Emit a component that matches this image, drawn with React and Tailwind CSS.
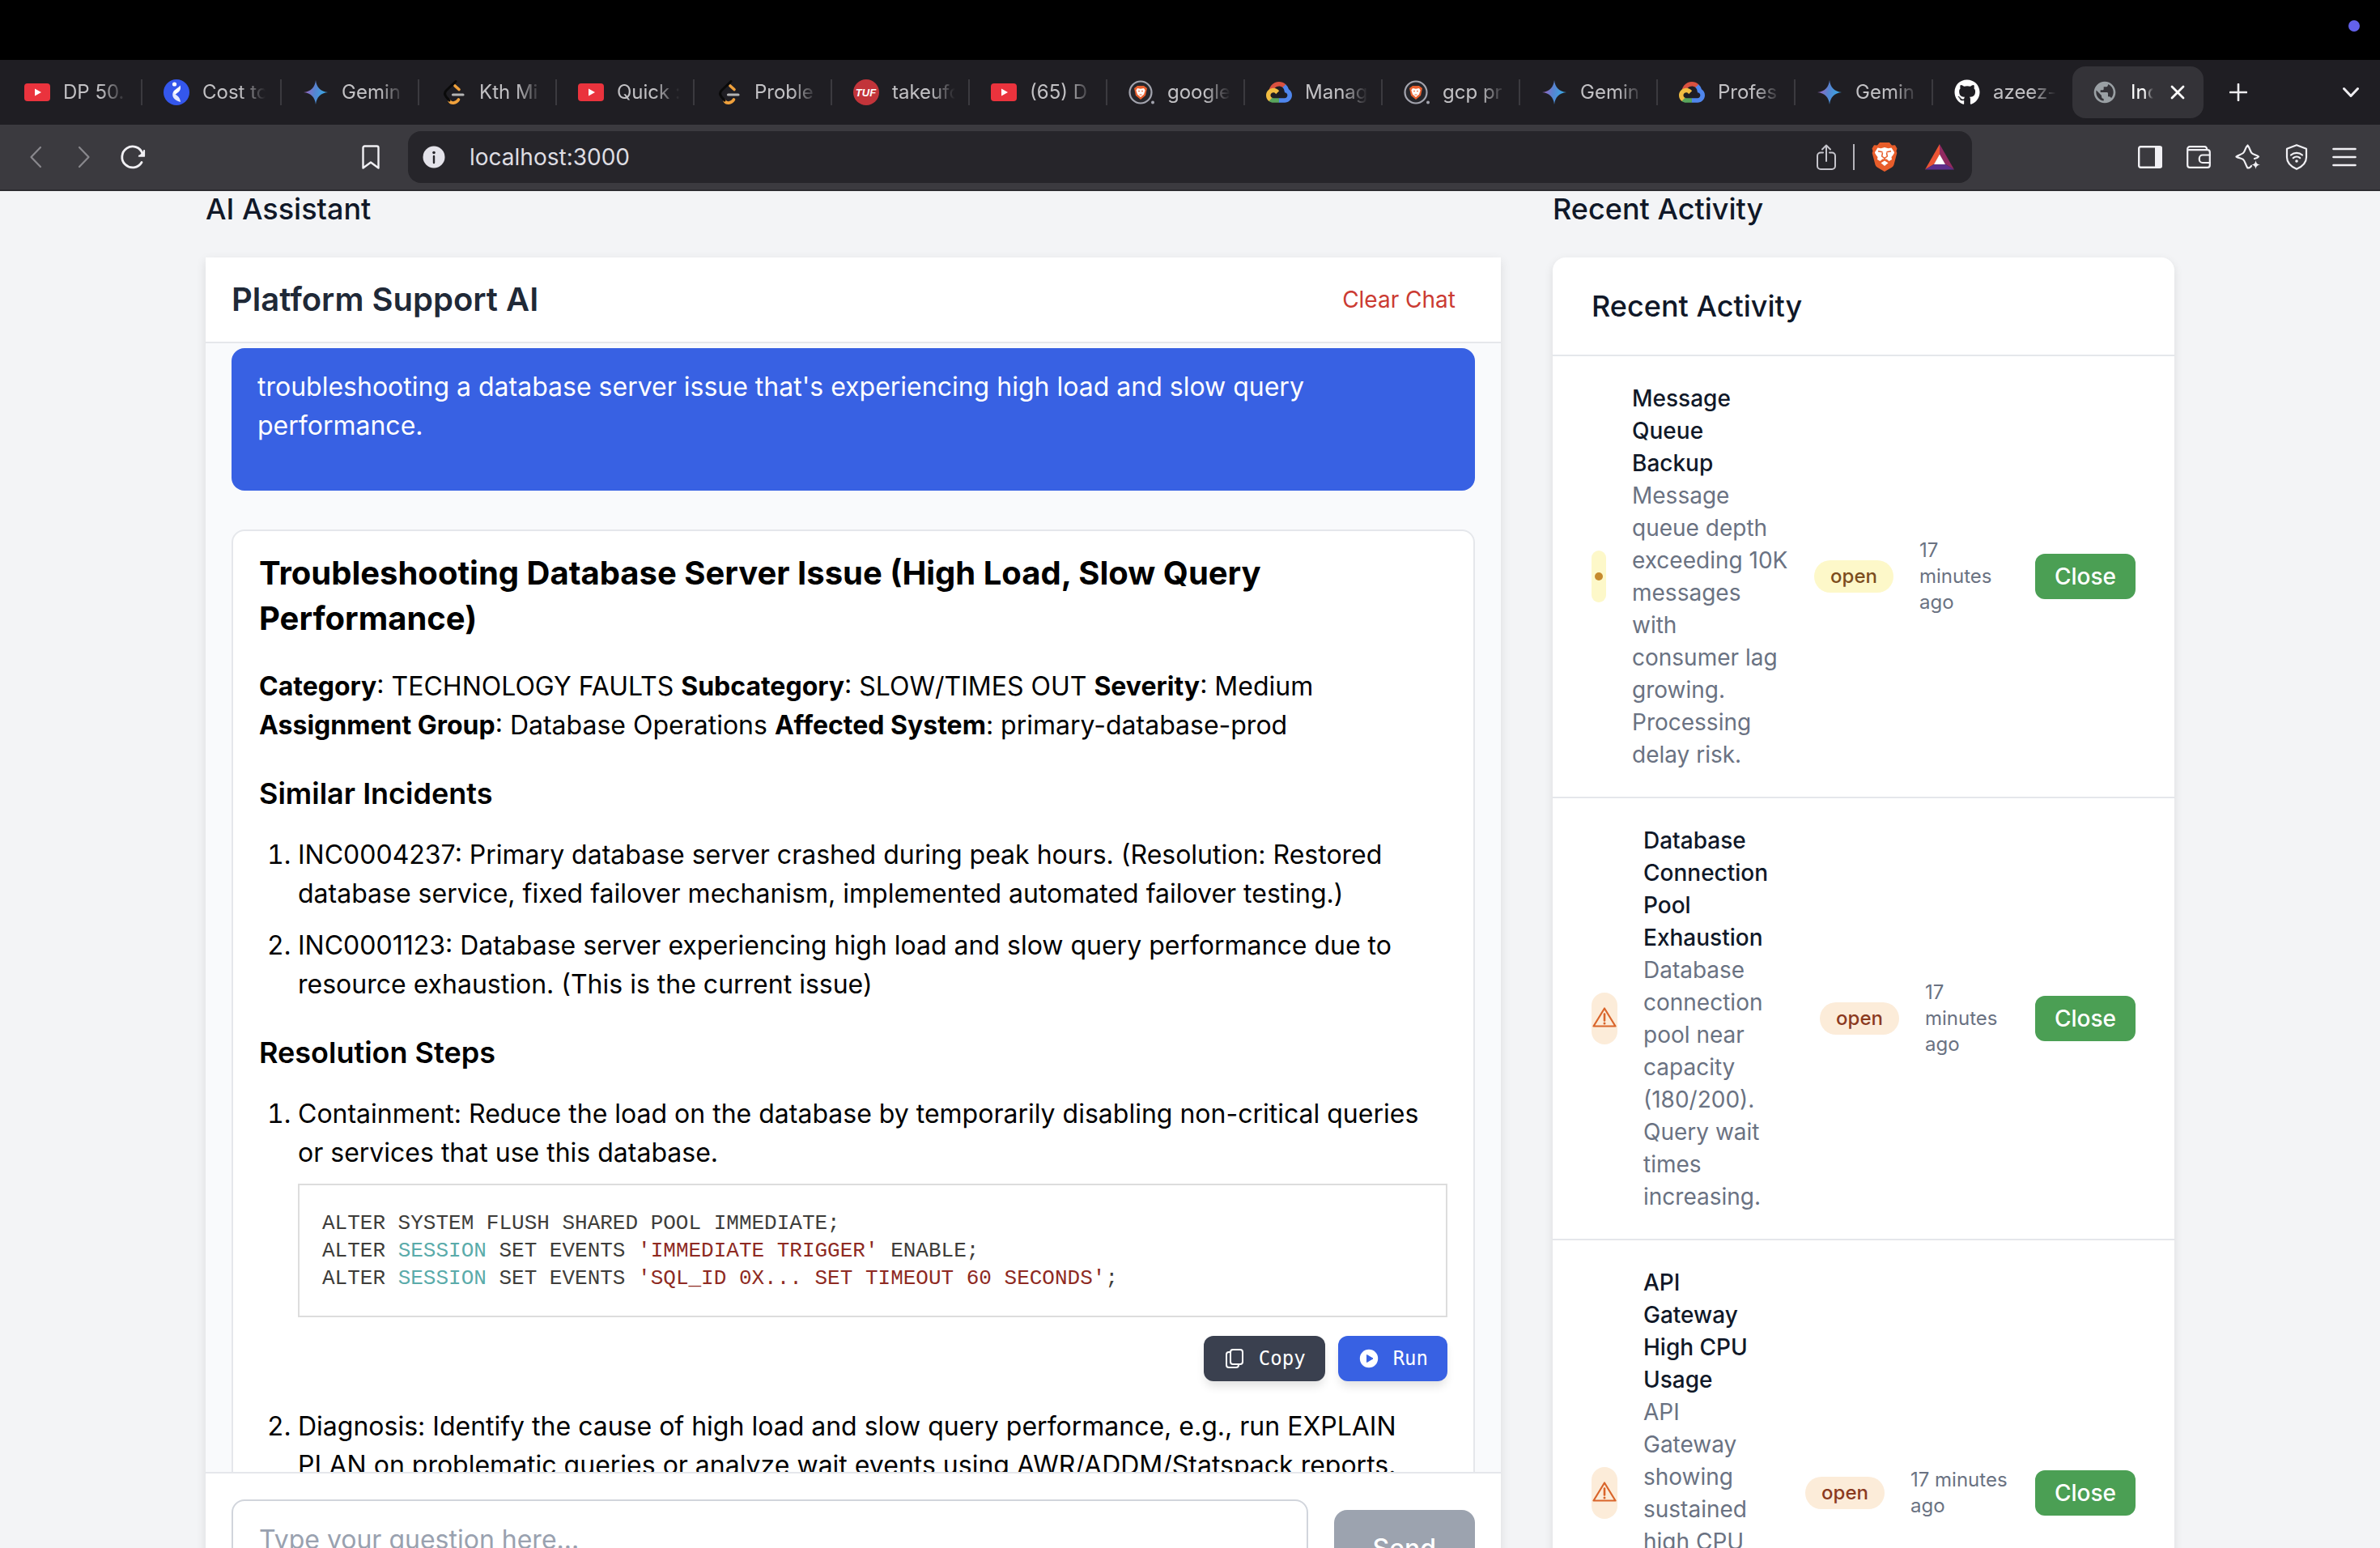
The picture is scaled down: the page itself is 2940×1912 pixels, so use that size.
import React from "react";
import { FaGithub } from "react-icons/fa";
import { MdPublic } from "react-icons/md";

/* ---------- favicons ---------- */

const YouTube = () => (
  <svg viewBox="0 0 32 32" className="size-8">
    <rect x="0" y="5" width="32" height="22" rx="4" fill="#ea333d" />
    <path d="M13 11.5v9l8-4.5z" fill="#fff" />
  </svg>
);

const CostIcon = () => (
  <svg viewBox="0 0 32 32" className="size-8">
    <circle cx="16" cy="16" r="16" fill="#3457ec" />
    <circle cx="13.5" cy="6" r="2.6" fill="#fff" />
    <path d="M12 16.500C11.500 13.500 18.500 11 20.500 7.500c1 3 .5 6.500-2.500 8.500l-4.500 3.500C12.500 19 12 18 12 16.500z" fill="#fff" />
    <path d="M12 15.500c1 3 8.500 4.500 9 12.500-4-1-8.500-3.500-9.500-7-.5-2-.3-4 .5-5.500z" fill="#e4e9fd" />
  </svg>
);

const Gemini = () => (
  <svg viewBox="0 0 32 32" className="size-8">
    <defs>
      <linearGradient id="gem" x1="0" x2="1" y1="0.4" y2="0.6">
        <stop offset="0.1" stopColor="#9168c0" />
        <stop offset="0.45" stopColor="#5684d1" />
        <stop offset="0.8" stopColor="#3fa0e0" />
      </linearGradient>
    </defs>
    <path d="M16 1c1 9 6 14 15 15-9 1-14 6-15 15-1-9-6-14-15-15C10 15 15 10 16 1z" fill="url(#gem)" />
  </svg>
);

const LeetCode = () => (
  <svg viewBox="0 0 32 32" className="size-8" fill="none" strokeLinecap="round" strokeWidth="3.600">
    <path d="M18 8l5 4.500M11 26.500c2 3.500 8 4 11.500-1.500" stroke="#f0a13c" />
    <path d="M19 2.500L7.500 13.500c-2.500 2.500-2.500 5.500 0 8.500l3.500 4" stroke="#0a0a0a" strokeWidth="3" />
    <path d="M15.500 19H28" stroke="#b3b3b3" strokeWidth="3.200" />
  </svg>
);

const Tuf = () => (
  <svg viewBox="0 0 32 32" className="size-8">
    <circle cx="16" cy="16" r="16" fill="#c2343a" />
    <text x="15.500" y="20.500" textAnchor="middle" fontFamily="Liberation Sans, sans-serif" fontStyle="italic" fontWeight="700" fontSize="13" fill="#fff">TUF</text>
  </svg>
);

const BraveSearch = () => (
  <svg viewBox="0 0 32 32" className="size-8">
    <circle cx="15" cy="16" r="13.500" fill="#26262b" stroke="#a3a4ae" strokeWidth="2.200" />
    <circle cx="30" cy="28.500" r="2" fill="#a3a4ae" />
    <path d="M11 8h8l4 3-2 9-6 5-6-5-2-9z" fill="#e9602f" />
    <path d="M11 11l4 .8 4-.8 1.600 2.500-1.600 5-4 3.500-4-3.500-1.600-5z" fill="#fff" />
    <path d="M12 14.500h2M16 14.500h2M13.500 19h3" stroke="#e9602f" strokeWidth="1" />
  </svg>
);

const GoogleCloud = () => (
  <svg viewBox="0 0 256 206" className="w-8">
    <path d="M170.252 56.819l22.253-22.253 1.483-9.370C153.437-11.677 88.976-7.496 52.420 33.920 42.267 45.423 34.734 59.764 30.717 74.573l7.970-1.123 44.505-7.340 3.436-3.513c19.797-21.742 53.270-24.667 76.128-6.168l7.496.390z" fill="#d95140" />
    <path d="M224.205 73.918a100.249 100.249 0 0 0-30.217-48.722l-31.232 31.232a55.515 55.515 0 0 1 20.379 44.037v5.544c15.350 0 27.797 12.445 27.797 27.796 0 15.352-12.446 27.485-27.797 27.485h-55.671l-5.466 5.934v33.340l5.466 5.231h55.670c39.930.311 72.553-31.494 72.864-71.424a72.303 72.303 0 0 0-31.793-60.453" fill="#4f86ed" />
    <path d="M71.870 205.796h55.593V161.290H71.870a27.275 27.275 0 0 1-11.400-2.498l-8.041 2.458-22.408 22.253-1.952 7.574c12.567 9.489 28.007 14.781 43.801 14.719" fill="#58a55c" />
    <path d="M71.870 61.425C31.940 61.664-.237 94.228.002 134.160a72.301 72.301 0 0 0 28.067 56.918l32.240-32.248c-13.987-6.313-20.208-22.780-13.895-36.766 6.313-13.987 22.780-20.208 36.765-13.895 6.166 2.783 11.112 7.721 13.895 13.895l32.247-32.247A72.273 72.273 0 0 0 71.870 61.424" fill="#f2bd42" />
  </svg>
);

const GitHub = () => <FaGithub className="size-8 text-white" />;

/* ---------- toolbar icons ---------- */

const line = { fill: "none", stroke: "currentColor", strokeLinecap: "round", strokeLinejoin: "round" };

const Chevron = ({ d }) => (
  <svg viewBox="0 0 16 28" className="h-7 w-4" {...line} strokeWidth="2.200"><path d={d} /></svg>
);

const Reload = () => (
  <svg viewBox="0 0 32 32" className="size-8" {...line} strokeWidth="2.800">
    <path d="M27 22.500A13 13 0 1 1 28 11.500" />
    <path d="M31 7v8.500h-8.500z" fill="currentColor" stroke="none" />
    <path d="M30 8v6.500h-6" strokeWidth="2.200" />
  </svg>
);

const Bookmark = () => (
  <svg viewBox="0 0 22 30" className="h-[30px] w-[22px]" {...line} strokeWidth="2.400">
    <path d="M1.500 3.500a2 2 0 0 1 2-2h15a2 2 0 0 1 2 2v25L11 21.500 1.500 28.500z" />
  </svg>
);

const Info = () => (
  <svg viewBox="0 0 28 28" className="size-7">
    <circle cx="14" cy="14" r="13.500" fill="#e4e3ea" />
    <circle cx="14" cy="8.500" r="1.800" fill="#26252a" />
    <path d="M14 13v8" stroke="#26252a" strokeWidth="2.400" strokeLinecap="round" />
  </svg>
);

const Share = () => (
  <svg viewBox="0 0 24 32" className="h-8 w-6 text-[#c6c5cc]" {...line} strokeWidth="2">
    <path d="M8 10.500H5a4 4 0 0 0-4 4V27a4 4 0 0 0 4 4h14a4 4 0 0 0 4-4V14.500a4 4 0 0 0-4-4h-3" />
    <path d="M12 21V2M7 6.500L12 1.500l5 5" />
  </svg>
);

const BraveLion = () => (
  <svg viewBox="0 0 32 36" className="h-9 w-8">
    <path d="M10 0h12l3 3.500 4-.3L31.500 7.500l-1 3 .8 2.500-3.800 14.500c-.5 1.500-1.500 2.500-3 3.500L16 36l-8.500-5c-1.500-1-2.500-2-3-3.500L.7 13l.8-2.500-1-3L3 3.200l4 .3z" fill="#e85d2a" />
    <path d="M7.500 6.500l4 .8L16 6l4.500 1.300 4-.8 3.500 5.500c.3 1.500-2 4-3.500 6l.5 3-3.500 2-3-2.500h-5L10.500 23 7 21l.5-3C6 16 3.700 13.500 4 12z" fill="#fff" />
    <path d="M16 22.500l4.500 2.800L16 29l-4.500-3.700z" fill="#fff" />
    <path d="M8 10.800l5.500 1M24 10.800l-5.500 1M13.500 12.500l-.8 4.500 3.300 2.500 3.300-2.500-.8-4.500M16 19.500v2" fill="none" stroke="#e85d2a" strokeWidth="1.500" />
  </svg>
);

const Bat = () => (
  <svg viewBox="0 0 36 32" className="h-8 w-9">
    <path d="M18 0L0 31.500l11.500-7L18 13z" fill="#ec5434" />
    <path d="M18 0l18 31.500-11.500-7L18 13z" fill="#922a61" />
    <path d="M0 31.500h36l-11.500-7h-13z" fill="#5d2f8c" />
    <path d="M18 12.500l7 12.500H11z" fill="#fff" />
  </svg>
);

const Sidebar = () => (
  <svg viewBox="0 0 30 28" className="h-7 w-[30px]">
    <rect x="1.200" y="1.200" width="27.600" height="25.600" rx="2" fill="none" stroke="currentColor" strokeWidth="2.400" />
    <rect x="21" y="1" width="8.500" height="26" rx="1" fill="currentColor" />
  </svg>
);

const Wallet = () => (
  <svg viewBox="0 0 30 28" className="h-7 w-[30px]" {...line} strokeWidth="2.200">
    <path d="M1.200 4v20a2.800 2.800 0 0 0 2.800 2.800h22a2.800 2.800 0 0 0 2.800-2.800V8a2.800 2.800 0 0 0-2.800-2.800H3M1.200 4A2.800 2.800 0 0 1 4 1.200h18.500c1.500 0 2.500 1 3 4" />
    <path d="M28.800 11.500h-9a4 4 0 0 0-4 4v1.500a4 4 0 0 0 4 4h9" />
  </svg>
);

const Leo = () => (
  <svg viewBox="0 0 32 32" className="size-8" {...line} strokeWidth="2.200">
    <path d="M20 27c-1 2-3.500 2.500-4.500 2.500C13 26 12.500 21 10 19 7.500 17.500 3.500 17 1.500 15.500c2-2 6-2.500 8.500-4.500s2.500-7 5.500-9.500c2.500 2.500 3 7.500 5 9.500s6.500 2.500 8.500 4.500c-1 1.500-3 2-5 2.500" />
    <path d="M25.500 20c.5 3.500 2 5 5.500 5.500-3.500.5-5 2-5.500 5.500-.5-3.500-2-5-5.500-5.500 3.500-.5 5-2 5.500-5.500z" fill="currentColor" stroke="none" />
  </svg>
);

const Vpn = () => (
  <svg viewBox="0 0 28 32" className="h-8 w-7" {...line} strokeWidth="2.200">
    <path d="M14 1.200l12 4.600v10.400c0 6-5 11.500-12 14.600C7 27.700 2 22.200 2 16.200V5.800z" />
    <path d="M7 13.500c4-3.500 10-3.500 14 0M9.800 17.200c2.500-2 6-2 8.400 0" />
    <circle cx="14" cy="21" r="1.800" fill="currentColor" stroke="none" />
  </svg>
);

const Menu = () => (
  <svg viewBox="0 0 30 24" className="h-6 w-[30px]" stroke="currentColor" strokeWidth="2.600" strokeLinecap="round">
    <path d="M1.500 2h27M1.500 12h27M1.500 22h27" />
  </svg>
);

/* ---------- browser chrome ---------- */

const tabs = [
  [YouTube, "DP 50."],
  [CostIcon, "Cost to"],
  [Gemini, "Gemin"],
  [LeetCode, "Kth Mi"],
  [YouTube, "Quick :"],
  [LeetCode, "Proble"],
  [Tuf, "takeufo"],
  [YouTube, "(65) D"],
  [BraveSearch, "google"],
  [GoogleCloud, "Manag"],
  [BraveSearch, "gcp pr"],
  [Gemini, "Gemin"],
  [GoogleCloud, "Profes"],
  [Gemini, "Gemin"],
  [GitHub, "azeez-"],
];

function TabStrip() {
  return (
    <div className="flex h-20 flex-none items-center overflow-hidden bg-[#1f1e23] pl-1 text-[24px] leading-8 text-[#c2c1c4]">
      {tabs.map(([Icon, label], i) => (
        <button
          key={i}
          className="flex h-8 w-[170px] flex-none items-center gap-4 border-r-2 border-[#3b3a3f] pl-[26px] whitespace-nowrap nth-[-n+2]:w-[172px] nth-[15]:border-transparent"
        >
          <span className="flex size-8 flex-none items-center justify-center"><Icon /></span>
          <span className="w-[78px] overflow-hidden text-left [mask-image:linear-gradient(to_right,black_60%,transparent)]">{label}</span>
        </button>
      ))}
      <div className="ml-0.5 flex h-16 w-[162px] flex-none items-center rounded-[16px] bg-[#343338] pl-6 text-white">
        <MdPublic className="size-8 flex-none text-[#9aa0a4]" />
        <span className="ml-4 w-[28px] overflow-hidden whitespace-nowrap [mask-image:linear-gradient(to_right,black_60%,transparent)]">Inc</span>
        <button aria-label="Close tab" className="ml-5">
          <svg viewBox="0 0 20 20" className="size-5" {...line} strokeWidth="2.800"><path d="M3 3l14 14M17 3L3 17" /></svg>
        </button>
      </div>
      <button aria-label="New tab" className="ml-8 text-[#eeedf0]">
        <svg viewBox="0 0 22 22" className="size-[22px]" {...line} strokeWidth="2.600"><path d="M11 1v20M1 11h20" /></svg>
      </button>
      <button aria-label="Search tabs" className="mr-[26px] ml-auto text-[#eeedf0]">
        <svg viewBox="0 0 20 14" className="h-3.5 w-5" {...line} strokeWidth="3"><path d="M1.500 2.500L10 11.500l8.500-9" /></svg>
      </button>
    </div>
  );
}

function Toolbar() {
  return (
    <div className="flex h-[82px] flex-none items-center border-b-2 border-[#2d2c31] bg-[#3b3a3f] text-[#f1f0f4]">
      <div className="flex items-center pl-9 text-[#89888d]">
        <button aria-label="Back"><Chevron d="M14 2L2.500 14 14 26" /></button>
        <button aria-label="Forward" className="ml-11"><Chevron d="M2 2l11.500 12L2 26" /></button>
      </div>
      <button aria-label="Reload" className="ml-9"><Reload /></button>
      <button aria-label="Bookmark" className="ml-[267px]"><Bookmark /></button>
      <div className="ml-[35px] flex h-16 max-w-[1932px] flex-1 items-center rounded-[16px] bg-[#26252a] pr-[22px] pl-[18px]">
        <Info />
        <input
          aria-label="Address"
          defaultValue="localhost:3000"
          className="ml-[30px] min-w-0 flex-1 bg-transparent text-[28px] leading-10 text-[#dedde2] outline-none"
        />
        <button aria-label="Share"><Share /></button>
        <span className="mx-[21px] h-8 w-0.5 bg-[#b5b4ba]" />
        <button aria-label="Brave Shields"><BraveLion /></button>
        <button aria-label="Rewards" className="ml-[34px]"><Bat /></button>
      </div>
      <div className="mr-[29px] ml-auto flex items-center gap-[30px]">
        <button aria-label="Sidebar"><Sidebar /></button>
        <button aria-label="Wallet"><Wallet /></button>
        <button aria-label="Leo AI"><Leo /></button>
        <button aria-label="VPN"><Vpn /></button>
        <button aria-label="Menu"><Menu /></button>
      </div>
    </div>
  );
}

/* ---------- chat ---------- */

const Str = ({ children }) => <span className="text-[#8e2a22]">{children}</span>;
const Kw = ({ children }) => <span className="text-[#5aabaa]">{children}</span>;

function CodeBlock() {
  return (
    <div className="mt-3.5 pb-4">
      <pre className="border-2 border-[#dddddd] bg-white px-[28px] pt-[30px] pb-[29px] font-['Liberation_Mono',monospace] text-[26px] leading-[34px] text-[#3e3d3a]">
        ALTER SYSTEM FLUSH SHARED POOL IMMEDIATE;{"\n"}
        ALTER <Kw>SESSION</Kw> SET EVENTS <Str>'IMMEDIATE TRIGGER'</Str> ENABLE;{"\n"}
        ALTER <Kw>SESSION</Kw> SET EVENTS <Str>'SQL_ID 0X... SET TIMEOUT 60 SECONDS'</Str>;
      </pre>
      <div className="mt-[23px] flex justify-end gap-4 font-['DejaVu_Sans_Mono',monospace] text-[24px] leading-8 text-white">
        <button className="flex items-center gap-4 rounded-[12px] bg-[#3a404f] px-6 py-3 shadow-[0_8px_12px_-2px_rgba(0,0,0,0.12)]">
          <svg viewBox="0 0 28 28" className="size-7" {...line} strokeWidth="2">
            <rect x="9" y="3" width="15" height="18" rx="3" />
            <path d="M9 6H7a3 3 0 0 0-3 3v13a3 3 0 0 0 3 3h9a3 3 0 0 0 3-3v-1" />
          </svg>
          Copy
        </button>
        <button className="flex items-center gap-4 rounded-[12px] bg-[#3861e3] px-6 py-3 shadow-[0_8px_12px_-2px_rgba(0,0,0,0.12)]">
          <svg viewBox="0 0 28 28" className="size-7">
            <circle cx="14" cy="14" r="11.200" fill="#fff" />
            <path d="M11.500 9.500v9l7.500-4.500z" fill="#3861e3" stroke="#3861e3" strokeWidth="1" strokeLinejoin="round" />
          </svg>
          Run
        </button>
      </div>
    </div>
  );
}

function Chat() {
  return (
    <div className="flex h-[1688px] flex-col bg-white shadow-[0_4px_12px_rgba(0,0,0,0.1)]">
      <div className="flex flex-none items-center justify-between border-b-2 border-gray-200 px-8 py-6">
        <h3 className="text-[40px] leading-[56px] font-semibold text-[#1f2937]">Platform Support AI</h3>
        <button className="px-6 text-[28px] leading-10 text-[#cb3b32]">Clear Chat</button>
      </div>
      <div className="flex min-h-0 flex-1 flex-col gap-12 overflow-hidden bg-[#f9fafc] px-8 pt-1.5">
        <div className="flex-none rounded-[16px] bg-[#3861e3] px-8 pt-6 pb-14 text-white">
          <p>troubleshooting a database server issue that's experiencing high load and slow query performance.</p>
        </div>
        <div className="flex-none rounded-[16px] border-2 border-gray-200 bg-white px-8 py-6 text-black">
          <h1 className="text-[40px] leading-[56px] font-bold">
            Troubleshooting Database Server Issue (High Load, Slow Query Performance)
          </h1>
          <p className="mt-8">
            <strong>Category</strong>: TECHNOLOGY FAULTS <strong>Subcategory</strong>: SLOW/TIMES OUT{" "}
            <strong>Severity</strong>: Medium <strong>Assignment Group</strong>: Database Operations{" "}
            <strong>Affected System</strong>: primary-database-prod
          </p>
          <h2 className="mt-8 text-[36px] leading-[56px] font-semibold">Similar Incidents</h2>
          <ol className="mt-6 flex list-decimal flex-col gap-4 pl-12">
            <li>INC0004237: Primary database server crashed during peak hours. (Resolution: Restored database service, fixed failover mechanism, implemented automated failover testing.)</li>
            <li>INC0001123: Database server experiencing high load and slow query performance due to resource exhaustion. (This is the current issue)</li>
          </ol>
          <h2 className="mt-8 text-[36px] leading-[56px] font-semibold">Resolution Steps</h2>
          <ol className="mt-6 flex list-decimal flex-col gap-4 pl-12">
            <li>
              Containment: Reduce the load on the database by temporarily disabling non-critical queries or services that use this database.
              <CodeBlock />
            </li>
            <li>Diagnosis: Identify the cause of high load and slow query performance, e.g., run EXPLAIN PLAN on problematic queries or analyze wait events using AWR/ADDM/Statspack reports.</li>
          </ol>
        </div>
      </div>
      <form className="flex flex-none items-center gap-8 border-t-2 border-gray-200 p-8" onSubmit={(e) => e.preventDefault()}>
        <textarea
          aria-label="Your question"
          placeholder="Type your question here..."
          className="h-[122px] min-w-0 flex-1 resize-none rounded-[16px] border-2 border-gray-300 px-8 py-6 placeholder:text-gray-400"
        />
        <button className="rounded-[16px] bg-[#9ca3af] px-12 py-6 font-medium text-white">Send</button>
      </form>
    </div>
  );
}

/* ---------- activity ---------- */

const Warning = () => (
  <svg viewBox="0 0 32 28" className="h-7 w-8" fill="none" stroke="#d9652b" strokeLinejoin="round">
    <path d="M16 1.500L29.500 23.500h-27z" strokeWidth="2.200" />
    <path d="M16 8.500v8" strokeWidth="2.600" strokeLinecap="round" />
    <circle cx="16" cy="20" r="1.500" fill="#d9652b" stroke="none" />
  </svg>
);

const Dot = () => <span className="size-2.5 rounded-full bg-[#c68a2e]" />;

const activities = [
  {
    icon: Dot,
    pill: "w-[18px] bg-[#fdf8c9]",
    badge: "bg-[#fdf8c9] text-[#7c4d1d]",
    body: "",
    time: "w-[111px]",
    title: "Message Queue Backup",
    text: "Message queue depth exceeding 10K messages with consumer lag growing. Processing delay risk.",
  },
  {
    icon: Warning,
    pill: "w-8 bg-[#fcecd9]",
    badge: "bg-[#fcecd9] text-[#8b3a1f]",
    body: "",
    time: "w-[104px]",
    title: "Database Connection Pool Exhaustion",
    text: "Database connection pool near capacity (180/200). Query wait times increasing.",
  },
  {
    icon: Warning,
    pill: "w-8 bg-[#fcecd9]",
    badge: "bg-[#fcecd9] text-[#8b3a1f]",
    body: "pr-5",
    time: "w-[122px]",
    title: "API Gateway High CPU Usage",
    text: "API Gateway showing sustained high CPU usage above threshold. Response degraded.",
  },
];

function Activity() {
  return (
    <div className="overflow-hidden rounded-[16px] bg-white shadow-[0_4px_12px_rgba(0,0,0,0.1)]">
      <h3 className="px-12 py-8 text-[36px] leading-[56px] font-medium text-gray-900">Recent Activity</h3>
      <ul>
        {activities.map(({ icon: Icon, ...a }) => (
          <li key={a.title} className="flex items-center gap-8 border-t-2 border-gray-200 px-12 py-8">
            <span className={"flex h-16 flex-none items-center justify-center rounded-full " + a.pill}><Icon /></span>
            <div className={"min-w-0 flex-1 text-[28px] leading-10 " + a.body}>
              <p className="font-medium text-gray-900">{a.title}</p>
              <p className="text-gray-500">{a.text}</p>
            </div>
            <span className={"flex-none rounded-full px-5 py-1 text-[24px] leading-8 font-medium " + a.badge}>open</span>
            <span className={"flex-none text-[24px] leading-8 text-gray-500 " + a.time}>17 minutes ago</span>
            <button className="flex-none rounded-[12px] bg-[#4b9f54] px-6 py-2 text-[28px] leading-10 font-medium text-white">Close</button>
          </li>
        ))}
      </ul>
    </div>
  );
}

export default function App() {
  return (
    <div className="flex h-screen flex-col overflow-hidden bg-[#f3f4f6] font-['Inter',sans-serif] text-[32px] leading-[48px]">
      <div className="flex h-[74px] flex-none items-center justify-end bg-black pr-[25px] pb-2.5">
        <span className="size-3.5 rounded-full bg-[#6361ea]" />
      </div>
      <TabStrip />
      <Toolbar />
      <main className="mx-auto grid min-h-0 w-full max-w-[2560px] flex-1 grid-cols-3 items-start gap-16 overflow-hidden px-16">
        <section className="col-span-2">
          <h2 className="mb-[38px] text-[36px] leading-[44px] font-medium text-gray-900">AI Assistant</h2>
          <Chat />
        </section>
        <section>
          <h2 className="mb-[38px] text-[36px] leading-[44px] font-medium text-gray-900">Recent Activity</h2>
          <Activity />
        </section>
      </main>
    </div>
  );
}
